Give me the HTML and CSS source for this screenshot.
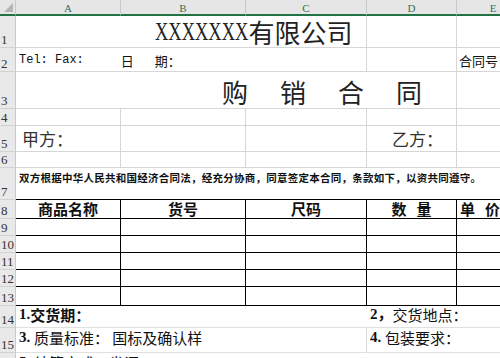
FILE: index.html
```html
<!DOCTYPE html>
<html lang="zh-CN">
<head>
    <meta charset="UTF-8">
    <meta name="viewport" content="width=device-width, initial-scale=1.0">
    <title>购销合同</title>
    <link rel="stylesheet" href="styles.css">
</head>
<body>
    <div class="sheet">
        <!-- column headers -->
        <div class="corner"><span class="corner-mark"></span></div>
        <div class="col-head">A</div>
        <div class="col-head">B</div>
        <div class="col-head">C</div>
        <div class="col-head">D</div>
        <div class="col-head">E</div>

        <!-- row 1 -->
        <div class="row-head">1</div>
        <div class="cell span-ac title"><span class="xs">XXXXXXX</span>有限公司</div>
        <div class="cell"></div>
        <div class="cell"></div>

        <!-- row 2 -->
        <div class="row-head">2</div>
        <div class="cell span-ac info"><span class="mono">Tel: Fax:</span><span class="day">日</span><span class="period">期：</span></div>
        <div class="cell"></div>
        <div class="cell info contract-no">合同号</div>

        <!-- row 3 -->
        <div class="row-head">3</div>
        <div class="cell span-ad heading">购销合同</div>
        <div class="cell"></div>

        <!-- row 4 -->
        <div class="row-head">4</div>
        <div class="cell"></div>
        <div class="cell"></div>
        <div class="cell"></div>
        <div class="cell"></div>
        <div class="cell"></div>

        <!-- row 5 -->
        <div class="row-head">5</div>
        <div class="cell party">甲方：</div>
        <div class="cell"></div>
        <div class="cell"></div>
        <div class="cell party party-b">乙方：</div>
        <div class="cell"></div>

        <!-- row 6 -->
        <div class="row-head">6</div>
        <div class="cell"></div>
        <div class="cell"></div>
        <div class="cell"></div>
        <div class="cell"></div>
        <div class="cell"></div>

        <!-- row 7 -->
        <div class="row-head">7</div>
        <div class="cell span-ae intro">双方根据中华人民共和国经济合同法，经充分协商，同意签定本合同，条款如下，以资共同遵守。</div>

        <!-- row 8: table header -->
        <div class="row-head">8</div>
        <div class="cell tbl th">商品名称</div>
        <div class="cell tbl th">货号</div>
        <div class="cell tbl th">尺码</div>
        <div class="cell tbl th wide">数量</div>
        <div class="cell tbl th wide left">单价</div>

        <!-- rows 9-13 -->
        <div class="row-head">9</div>
        <div class="cell tbl"></div><div class="cell tbl"></div><div class="cell tbl"></div><div class="cell tbl"></div><div class="cell tbl"></div>
        <div class="row-head">10</div>
        <div class="cell tbl"></div><div class="cell tbl"></div><div class="cell tbl"></div><div class="cell tbl"></div><div class="cell tbl"></div>
        <div class="row-head">11</div>
        <div class="cell tbl"></div><div class="cell tbl"></div><div class="cell tbl"></div><div class="cell tbl"></div><div class="cell tbl"></div>
        <div class="row-head">12</div>
        <div class="cell tbl"></div><div class="cell tbl"></div><div class="cell tbl"></div><div class="cell tbl"></div><div class="cell tbl"></div>
        <div class="row-head">13</div>
        <div class="cell tbl"></div><div class="cell tbl"></div><div class="cell tbl"></div><div class="cell tbl"></div><div class="cell tbl"></div>

        <!-- row 14 -->
        <div class="row-head">14</div>
        <div class="cell span-ac term bold no-right"><span class="num">1.</span>交货期：</div>
        <div class="cell span-de term"><span class="num">2，</span>交货地点：</div>

        <!-- row 15 -->
        <div class="row-head">15</div>
        <div class="cell span-ac term top"><span class="num">3.&nbsp;</span>质量标准：&nbsp;国标及确认样</div>
        <div class="cell span-de term top"><span class="num">4.&nbsp;</span>包装要求：</div>

        <!-- row 16 -->
        <div class="row-head">16</div>
        <div class="cell span-ae term top cut"><span class="num">5.&nbsp;</span>结算方式：发汇</div>
    </div>
</body>
</html>
```

FILE: styles.css
```css
body {
    margin: 0;
    width: 500px;
    height: 358px;
    overflow: hidden;
    background-color: #fff;
    font-family: "Noto Sans CJK SC", sans-serif;
    color: #111;
}

.sheet {
    display: grid;
    width: 530px;
    grid-template-columns: 16px 105px 125px 121px 90px 73px;
    grid-template-rows: 16px 32px 24px 37px 17px 26px 16px 32px 19px 17px 17px 17px 17px 19px 22px 25px 20px;
}

/* headers */
.corner {
    position: relative;
    background-color: #e6e6e6;
    border-right: 1px solid #c9c9c9;
    border-bottom: 2px solid #217346;
}

.corner-mark {
    position: absolute;
    right: 2px;
    bottom: 2px;
    width: 0;
    height: 0;
    border-left: 9px solid transparent;
    border-bottom: 9px solid #b4b4b4;
}

.col-head {
    display: flex;
    align-items: flex-end;
    justify-content: center;
    background-color: #e6e6e6;
    border-right: 1px solid #c9c9c9;
    border-bottom: 2px solid #217346;
    font-family: "Liberation Serif", serif;
    font-size: 11px;
    line-height: 12px;
    color: #3d6e53;
}

.row-head {
    display: flex;
    align-items: flex-end;
    padding-left: 1px;
    padding-bottom: 1px;
    background-color: #e9e9e9;
    border-right: 1px solid #c9c9c9;
    border-bottom: 1px solid #d2d2d2;
    font-family: "Liberation Serif", serif;
    font-size: 13px;
    line-height: 13px;
    color: #333;
    box-sizing: border-box;
    overflow: hidden;
}

/* cells */
.cell {
    display: flex;
    align-items: flex-end;
    box-sizing: border-box;
    border-right: 1px solid #d6d6d6;
    border-bottom: 1px solid #d6d6d6;
    white-space: nowrap;
    min-width: 0;
}

.span-ac { grid-column: span 3; }
.span-ad { grid-column: span 4; }
.span-ae { grid-column: span 5; border-right: none; }
.span-de { grid-column: span 2; border-right: none; }
.no-right { border-right: none; }

.title {
    padding-left: 139px;
    padding-bottom: 0;
    font-size: 26px;
    line-height: 30px;
    color: #222;
}

.xs {
    display: inline-block;
    font-family: "Liberation Serif", serif;
    transform: scaleX(0.71);
    transform-origin: left bottom;
    margin-right: -38px;
}

.info {
    padding-left: 3px;
    padding-bottom: 3px;
    font-size: 13px;
    line-height: 15px;
}

.mono {
    font-family: "Liberation Mono", monospace;
    font-size: 12px;
}

.day { margin-left: 37px; }
.period { margin-left: 21px; }

.contract-no {
    padding-left: 2px;
}

.heading {
    padding-left: 206px;
    padding-bottom: 1px;
    font-size: 26px;
    line-height: 30px;
    letter-spacing: 32px;
    color: #222;
}

.party {
    padding-left: 6px;
    padding-bottom: 2px;
    font-size: 17px;
    line-height: 20px;
    color: #333;
}

.party-b { padding-left: 25px; }

.intro {
    align-items: flex-start;
    padding-left: 3px;
    padding-top: 3px;
    font-size: 10.5px;
    line-height: 13px;
    font-weight: bold;
    letter-spacing: 0.25px;
    border-bottom: 1px solid #000;
}

/* goods table */
.tbl {
    border-right: 1px solid #000;
    border-bottom: 1px solid #000;
}

.th {
    justify-content: center;
    padding-bottom: 1px;
    font-size: 15px;
    line-height: 17px;
    font-weight: bold;
}

.th.wide {
    letter-spacing: 10px;
    text-indent: 10px;
}

.th.left {
    justify-content: flex-start;
    text-indent: 0;
    padding-left: 3px;
}

/* terms */
.term {
    padding-left: 3px;
    padding-bottom: 4px;
    font-size: 15px;
    line-height: 17px;
    border-bottom: 1px solid #e0e0e0;
}

.term.top {
    align-items: flex-start;
    padding-top: 1px;
}

.bold { font-weight: bold; }

.num {
    font-family: "Liberation Serif", serif;
    font-weight: bold;
}

.cut { padding-top: 2px; }
```
